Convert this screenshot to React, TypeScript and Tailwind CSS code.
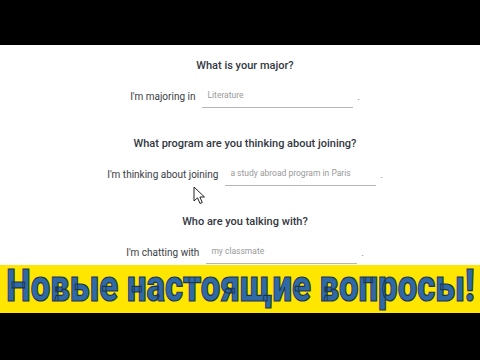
const QUESTIONS = [
  {
    title: "What is your major?",
    label: "I'm majoring in",
    placeholder: "Literature",
  },
  {
    title: "What program are you thinking about joining?",
    label: "I'm thinking about joining",
    placeholder: "a study abroad program in Paris",
  },
  {
    title: "Who are you talking with?",
    label: "I'm chatting with",
    placeholder: "my classmate",
  },
]

function Cursor() {
  return (
    <svg width="14" height="20" viewBox="0 0 14 20" className="absolute left-[193px] top-[141px]">
      <path
        d="M1 1 L1 15 L4.5 11.8 L7 17.5 L9.3 16.5 L6.9 11 L11.5 11 Z"
        fill="#fff"
        stroke="#222"
        strokeWidth="1"
        strokeLinejoin="round"
      />
    </svg>
  )
}

export default function App() {
  return (
    <div className="w-[480px] h-[360px] flex flex-col bg-black font-['Roboto',_'Liberation_Sans',_sans-serif]">
      {/* top letterbox */}
      <div className="h-[45px] bg-black" />

      {/* form */}
      <div className="relative h-[220px] bg-white pl-[10px] pt-[13px] flex flex-col items-center">
        {QUESTIONS.map((q, i) => (
          <div key={q.title} className={`flex flex-col items-center ${i > 0 ? "mt-[28px]" : ""}`}>
            <h3 className="text-[11px] leading-[16px] font-medium text-[#333842]">{q.title}</h3>
            <div className="mt-[12px] flex items-end">
              <span className="text-[10px] leading-[16px] text-[#3a3d44] mb-[3px]">{q.label}</span>
              <div className="ml-[7px] w-[151px] h-[22px] border-b border-[#b5b5b5] flex items-center pl-[5px]">
                <span className="text-[8.5px] text-[#9a9a9a] mt-[-2px]">{q.placeholder}</span>
              </div>
              <span className="ml-[4px] text-[9px] leading-[16px] text-[#555] mb-[3px]">.</span>
            </div>
          </div>
        ))}
        <Cursor />
      </div>

      {/* banner */}
      <div className="h-[48px] bg-[#ffe600] flex items-start justify-center">
        <span className="inline-block shrink-0 mt-[-3px] mx-[-63px] scale-x-[0.79] text-[44px] leading-[48px] font-black text-[#2f6aa6] [-webkit-text-stroke:1.2px_#1d3550] font-['Roboto',_sans-serif] whitespace-nowrap">
          Новые настоящие вопросы!
        </span>
      </div>

      {/* bottom letterbox */}
      <div className="flex-1 bg-black" />
    </div>
  )
}
